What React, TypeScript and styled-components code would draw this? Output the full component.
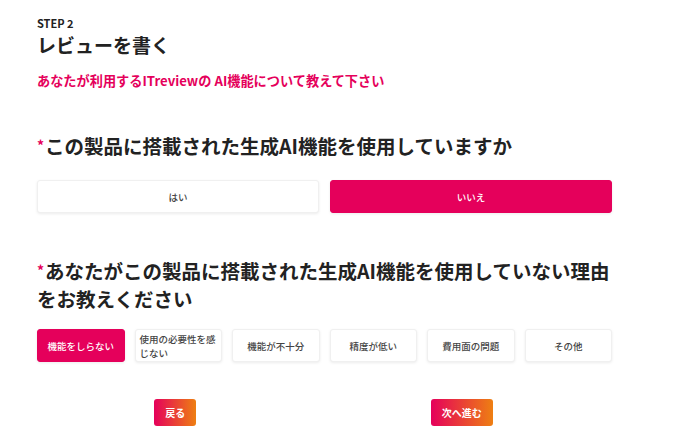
import React, { useState } from "react";
import styled, { createGlobalStyle } from "styled-components";

const GlobalStyle = createGlobalStyle`
  html, body { margin: 0; padding: 0; background: #ffffff; }
  body { font-family: "Noto Sans CJK JP", "Noto Sans", sans-serif; color: #222; }
  * { box-sizing: border-box; }
`;

const PINK = "#e5005b";

const Page = styled.main`
  width: 575px;
  margin-left: 37px;
  padding-top: 15px;
`;

const Step = styled.div`
  font-size: 11px;
  font-weight: 700;
  line-height: 16px;
  color: #222;
`;

const Title = styled.h1`
  margin: 2px 0 0;
  font-size: 19px;
  font-weight: 700;
  line-height: 24px;
  color: #222;
`;

const Lead = styled.p`
  margin: 14px 0 0;
  font-size: 13.2px;
  font-weight: 700;
  line-height: 20px;
  color: ${PINK};
`;

const Question = styled.h2<{ $top: number }>`
  margin: ${(p) => p.$top}px -12px 0 0;
  font-size: 19.5px;
  font-weight: 700;
  line-height: 28px;
  color: #222;
`;

const Star = styled.span`
  display: inline-block;
  color: ${PINK};
  font-size: 14px;
  line-height: 14px;
  vertical-align: 3px;
  margin-right: 1px;
`;

const Grid = styled.div<{ $cols: number; $gap: number; $top: number }>`
  display: grid;
  grid-template-columns: repeat(${(p) => p.$cols}, 1fr);
  gap: ${(p) => p.$gap}px;
  margin-top: ${(p) => p.$top}px;
`;

const Choice = styled.button<{ $active: boolean }>`
  height: 33px;
  border-radius: 3px;
  border: 1px solid ${(p) => (p.$active ? PINK : "#f0f0f0")};
  background: ${(p) => (p.$active ? PINK : "#ffffff")};
  color: ${(p) => (p.$active ? "#ffffff" : "#444")};
  box-shadow: 0 1px 3px rgba(0, 0, 0, 0.08);
  font-family: inherit;
  font-size: 9.5px;
  font-weight: 500;
  line-height: 14px;
  padding: 0 4px;
  display: flex;
  align-items: center;
  justify-content: center;
  cursor: pointer;
`;

const ChoiceText = styled.span`
  display: block;
  text-align: left;
`;

const Nav = styled.div`
  display: flex;
  justify-content: space-around;
  width: 573px;
  margin-top: 37px;
`;

const NavButton = styled.button`
  height: 27px;
  padding: 0 11px;
  border: none;
  border-radius: 3px;
  background: linear-gradient(90deg, #e5005b 0%, #ee7f12 100%);
  color: #fff;
  font-family: inherit;
  font-size: 10px;
  font-weight: 700;
  cursor: pointer;
`;

const reasons = [
  "機能をしらない",
  "使用の必要性を感じない",
  "機能が不十分",
  "精度が低い",
  "費用面の問題",
  "その他",
];

export default function App() {
  const [use, setUse] = useState<"yes" | "no">("no");
  const [reason, setReason] = useState(0);
  return (
    <>
      <GlobalStyle />
      <Page>
        <Step>STEP 2</Step>
        <Title>レビューを書く</Title>
        <Lead>あなたが利用するITreviewの AI機能について教えて下さい</Lead>
        <Question $top={41}>
          <Star>*</Star>この製品に搭載された生成AI機能を使用していますか
        </Question>
        <Grid $cols={2} $gap={11} $top={20}>
          <Choice $active={use === "yes"} onClick={() => setUse("yes")}>
            はい
          </Choice>
          <Choice $active={use === "no"} onClick={() => setUse("no")}>
            いいえ
          </Choice>
        </Grid>
        <Question $top={44}>
          <Star>*</Star>あなたがこの製品に搭載された生成AI機能を使用していない理由をお教えください
        </Question>
        <Grid $cols={6} $gap={10} $top={16}>
          {reasons.map((r, i) => (
            <Choice key={r} $active={reason === i} onClick={() => setReason(i)}>
              <ChoiceText>{r}</ChoiceText>
            </Choice>
          ))}
        </Grid>
        <Nav>
          <NavButton>戻る</NavButton>
          <NavButton>次へ進む</NavButton>
        </Nav>
      </Page>
    </>
  );
}
